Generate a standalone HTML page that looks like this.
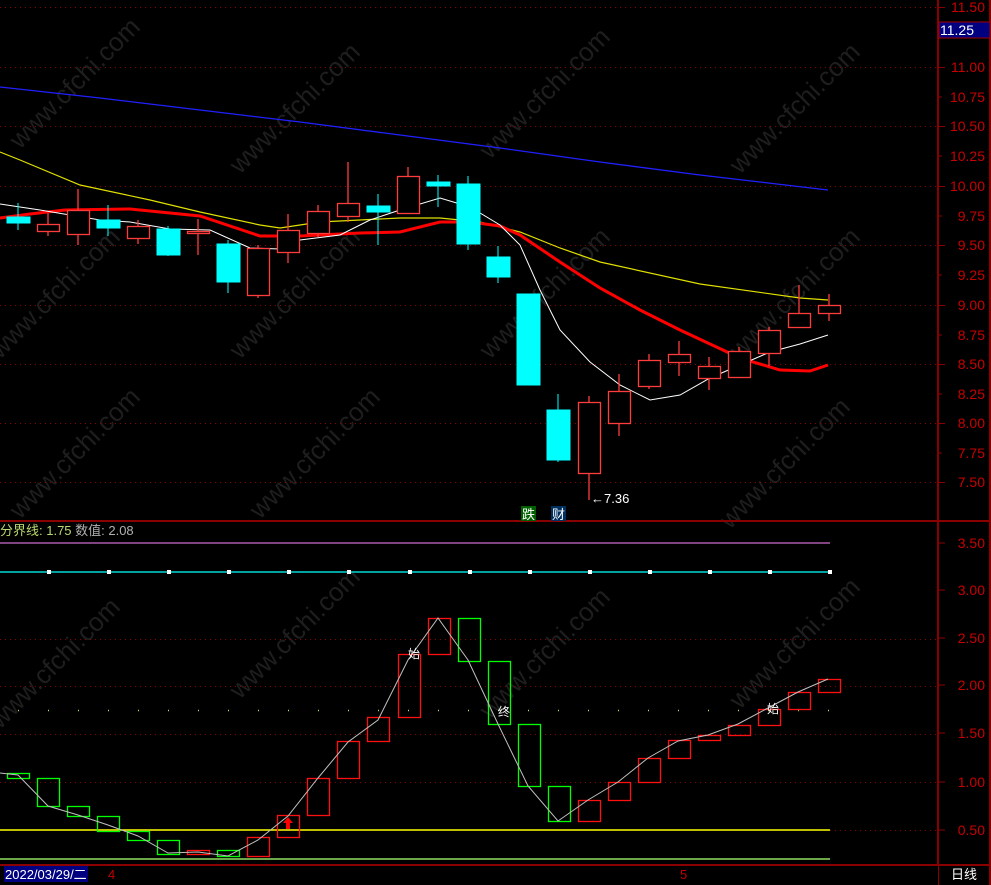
<!DOCTYPE html>
<html><head><meta charset="utf-8"><style>
html,body{margin:0;padding:0;background:#000;}
svg{display:block;font-family:"Liberation Sans","Noto Sans CJK SC",sans-serif;}
</style></head><body>
<svg width="991" height="885" viewBox="0 0 991 885" xmlns="http://www.w3.org/2000/svg">
<rect width="991" height="885" fill="#000"/>
<g fill="#1e1e1e" font-size="26" font-family="Liberation Sans,sans-serif">
<text transform="translate(20,150) rotate(-45)">www.cfchi.com</text>
<text transform="translate(240,175) rotate(-45)">www.cfchi.com</text>
<text transform="translate(490,160) rotate(-45)">www.cfchi.com</text>
<text transform="translate(740,175) rotate(-45)">www.cfchi.com</text>
<text transform="translate(0,360) rotate(-45)">www.cfchi.com</text>
<text transform="translate(240,360) rotate(-45)">www.cfchi.com</text>
<text transform="translate(490,360) rotate(-45)">www.cfchi.com</text>
<text transform="translate(740,360) rotate(-45)">www.cfchi.com</text>
<text transform="translate(20,520) rotate(-45)">www.cfchi.com</text>
<text transform="translate(260,520) rotate(-45)">www.cfchi.com</text>
<text transform="translate(730,530) rotate(-45)">www.cfchi.com</text>
<text transform="translate(0,730) rotate(-45)">www.cfchi.com</text>
<text transform="translate(240,700) rotate(-45)">www.cfchi.com</text>
<text transform="translate(490,720) rotate(-45)">www.cfchi.com</text>
<text transform="translate(740,710) rotate(-45)">www.cfchi.com</text>
</g>
<g stroke="#8a0000" stroke-width="1" stroke-dasharray="1,4">
<line x1="0" y1="7.5" x2="938" y2="7.5"/><line x1="0" y1="67.5" x2="938" y2="67.5"/>
<line x1="0" y1="126.5" x2="938" y2="126.5"/><line x1="0" y1="186.5" x2="938" y2="186.5"/>
<line x1="0" y1="245.5" x2="938" y2="245.5"/><line x1="0" y1="305.5" x2="938" y2="305.5"/>
<line x1="0" y1="364.5" x2="938" y2="364.5"/><line x1="0" y1="423.5" x2="938" y2="423.5"/>
<line x1="0" y1="482.5" x2="938" y2="482.5"/>
<line x1="0" y1="639.5" x2="938" y2="639.5"/><line x1="0" y1="686.5" x2="938" y2="686.5"/>
<line x1="0" y1="734.5" x2="938" y2="734.5"/><line x1="0" y1="782.5" x2="938" y2="782.5"/>
<line x1="830" y1="830.5" x2="938" y2="830.5"/>
</g>
<g stroke="#8a0000" stroke-width="2" fill="none">
<line x1="938" y1="0" x2="938" y2="885"/>
<line x1="0" y1="521" x2="991" y2="521"/>
<line x1="0" y1="865" x2="991" y2="865"/>
<line x1="990" y1="0" x2="990" y2="885"/>
</g>
<g stroke="#8a0000" stroke-width="1">
<line x1="938" y1="7.5" x2="945" y2="7.5"/><line x1="938" y1="67.5" x2="945" y2="67.5"/><line x1="938" y1="97" x2="942" y2="97"/>
<line x1="938" y1="126.5" x2="945" y2="126.5"/><line x1="938" y1="156" x2="942" y2="156"/><line x1="938" y1="186.5" x2="945" y2="186.5"/>
<line x1="938" y1="216" x2="942" y2="216"/><line x1="938" y1="245.5" x2="945" y2="245.5"/><line x1="938" y1="275" x2="942" y2="275"/>
<line x1="938" y1="305.5" x2="945" y2="305.5"/><line x1="938" y1="335" x2="942" y2="335"/><line x1="938" y1="364.5" x2="945" y2="364.5"/>
<line x1="938" y1="394" x2="942" y2="394"/><line x1="938" y1="423.5" x2="945" y2="423.5"/><line x1="938" y1="453" x2="942" y2="453"/>
<line x1="938" y1="482.5" x2="945" y2="482.5"/>
<line x1="938" y1="543" x2="945" y2="543"/><line x1="938" y1="590" x2="945" y2="590"/><line x1="938" y1="638" x2="945" y2="638"/>
<line x1="938" y1="685" x2="945" y2="685"/><line x1="938" y1="733" x2="945" y2="733"/><line x1="938" y1="782" x2="945" y2="782"/>
<line x1="938" y1="830" x2="945" y2="830"/>
<line x1="110" y1="866" x2="110" y2="880"/><line x1="679" y1="866" x2="679" y2="880"/>
</g>
<g fill="#c80000" font-size="14" text-anchor="end">
<text x="985" y="12">11.50</text><text x="985" y="72">11.00</text><text x="985" y="102">10.75</text>
<text x="985" y="131">10.50</text><text x="985" y="161">10.25</text><text x="985" y="191">10.00</text>
<text x="985" y="221">9.75</text><text x="985" y="250">9.50</text><text x="985" y="280">9.25</text>
<text x="985" y="310">9.00</text><text x="985" y="340">8.75</text><text x="985" y="369">8.50</text>
<text x="985" y="399">8.25</text><text x="985" y="428">8.00</text><text x="985" y="458">7.75</text>
<text x="985" y="487">7.50</text>
<text x="985" y="548">3.50</text><text x="985" y="595">3.00</text><text x="985" y="643">2.50</text>
<text x="985" y="690">2.00</text><text x="985" y="738">1.50</text><text x="985" y="787">1.00</text>
<text x="985" y="835">0.50</text>
</g>
<rect x="939" y="22" width="51" height="16" fill="#000080" stroke="#a00000"/>
<text x="940" y="35" fill="#fff" font-size="14">11.25</text>

<polyline fill="none" stroke="#2020ff" stroke-width="1.3" points="0,87 100,98 200,110 300,122 400,135 500,148 600,162 700,175 828,190"/>
<polyline fill="none" stroke="#e0e000" stroke-width="1.2" points="0,152 20,160 80,185 150,200 200,212 260,225 280,228 320,222 400,218 440,218 480,222 520,232 560,248 600,262 700,284 800,298 828,300"/>
<polyline fill="none" stroke="#ff0000" stroke-width="3" points="0,218 30,214 65,210 130,209 200,216 260,236 300,236 360,233 400,232 440,222 470,222 500,226 520,235 560,262 600,288 640,310 680,330 740,358 780,370 810,371 828,365"/>
<polyline fill="none" stroke="#fff" stroke-width="1" points="0,204 40,210 70,215 100,220 130,222 170,229 210,230 250,248 280,249 300,240 340,235 370,220 400,210 440,198 470,207 500,225 520,245 540,290 560,330 590,362 620,385 650,400 680,395 710,378 740,365 770,352 800,344 828,335"/>

<g stroke="#00ffff" fill="#00ffff">
<line x1="18" y1="203" x2="18" y2="230"/><rect x="7" y="217" width="23" height="6"/>
<line x1="108" y1="205" x2="108" y2="236"/><rect x="97" y="220" width="23" height="8"/>
<line x1="168" y1="226" x2="168" y2="256"/><rect x="157" y="229" width="23" height="26"/>
<line x1="228" y1="240" x2="228" y2="293"/><rect x="217" y="244" width="23" height="38"/>
<line x1="378" y1="194" x2="378" y2="245"/><rect x="367" y="206" width="23" height="6"/>
<line x1="438" y1="175" x2="438" y2="207"/><rect x="427" y="182" width="23" height="4"/>
<line x1="468" y1="176" x2="468" y2="250"/><rect x="457" y="184" width="23" height="60"/>
<line x1="498" y1="246" x2="498" y2="283"/><rect x="487" y="257" width="23" height="20"/>
<rect x="517" y="294" width="23" height="91"/>
<line x1="558" y1="394" x2="558" y2="462"/><rect x="547" y="410" width="23" height="50"/>
</g>
<g stroke="#ff3c3c" fill="#000" stroke-width="1.3">
<line x1="48" y1="213" x2="48" y2="236"/><rect x="37.5" y="224.5" width="22" height="7"/>
<line x1="78" y1="189" x2="78" y2="245"/><rect x="67.5" y="210.5" width="22" height="24"/>
<line x1="138" y1="220" x2="138" y2="244"/><rect x="127.5" y="226.5" width="22" height="12"/>
<line x1="198" y1="219" x2="198" y2="255"/><rect x="187.5" y="231.5" width="22" height="2"/>
<line x1="258" y1="245" x2="258" y2="298"/><rect x="247.5" y="248.5" width="22" height="47"/>
<line x1="288" y1="214" x2="288" y2="263"/><rect x="277.5" y="230.5" width="22" height="22"/>
<line x1="318" y1="205" x2="318" y2="237"/><rect x="307.5" y="211.5" width="22" height="22"/>
<line x1="348" y1="162" x2="348" y2="222"/><rect x="337.5" y="203.5" width="22" height="13"/>
<line x1="408" y1="167" x2="408" y2="213"/><rect x="397.5" y="176.5" width="22" height="37"/>
<line x1="589" y1="396" x2="589" y2="500"/><rect x="578.5" y="402.5" width="22" height="71"/>
<line x1="619" y1="374" x2="619" y2="436"/><rect x="608.5" y="391.5" width="22" height="32"/>
<line x1="649" y1="354" x2="649" y2="389"/><rect x="638.5" y="360.5" width="22" height="26"/>
<line x1="679" y1="341" x2="679" y2="376"/><rect x="668.5" y="354.5" width="22" height="8"/>
<line x1="709" y1="357" x2="709" y2="390"/><rect x="698.5" y="366.5" width="22" height="12"/>
<line x1="739" y1="347" x2="739" y2="377"/><rect x="728.5" y="351.5" width="22" height="26"/>
<line x1="769" y1="327" x2="769" y2="366"/><rect x="758.5" y="330.5" width="22" height="23"/>
<line x1="799" y1="285" x2="799" y2="327"/><rect x="788.5" y="313.5" width="22" height="14"/>
<line x1="829" y1="294" x2="829" y2="321"/><rect x="818.5" y="305.5" width="22" height="8"/>
</g>
<text x="591" y="503" fill="#fff" font-size="13">←7.36</text>
<rect x="521" y="506" width="15" height="15" fill="#006000"/><text x="522" y="519" fill="#fff" font-size="13">跌</text>
<rect x="551" y="506" width="15" height="15" fill="#003060"/><text x="552" y="519" fill="#fff" font-size="13">财</text>

<text x="0" y="535" font-size="13" fill="#b8d870">分界线: 1.75 <tspan fill="#b0b0b0">数值: 2.08</tspan></text>
<line x1="0" y1="543" x2="830" y2="543" stroke="#ff88ff" stroke-width="1"/>
<line x1="0" y1="572" x2="831" y2="572" stroke="#00d8d8" stroke-width="1.5"/>
<g fill="#fff">
<rect x="47" y="570" width="4" height="4"/><rect x="107" y="570" width="4" height="4"/><rect x="167" y="570" width="4" height="4"/>
<rect x="227" y="570" width="4" height="4"/><rect x="287" y="570" width="4" height="4"/><rect x="347" y="570" width="4" height="4"/>
<rect x="408" y="570" width="4" height="4"/><rect x="468" y="570" width="4" height="4"/><rect x="528" y="570" width="4" height="4"/>
<rect x="588" y="570" width="4" height="4"/><rect x="648" y="570" width="4" height="4"/><rect x="708" y="570" width="4" height="4"/>
<rect x="768" y="570" width="4" height="4"/><rect x="828" y="570" width="4" height="4"/>
</g>
<line x1="18" y1="710.5" x2="840" y2="710.5" stroke="#a8e060" stroke-width="1.5" stroke-dasharray="1,29"/>
<line x1="0" y1="830" x2="830" y2="830" stroke="#ffff00" stroke-width="1.5"/>
<line x1="0" y1="859" x2="830" y2="859" stroke="#90e060" stroke-width="1.5"/>
<g fill="none" stroke="#00ff00" stroke-width="1.3">
<rect x="7.5" y="773.5" width="22" height="5"/><rect x="37.5" y="778.5" width="22" height="28"/>
<rect x="67.5" y="806.5" width="22" height="10"/><rect x="97.5" y="816.5" width="22" height="15"/>
<rect x="127.5" y="831.5" width="22" height="9"/><rect x="157.5" y="840.5" width="22" height="14"/>
<rect x="217.5" y="850.5" width="22" height="6"/>
<rect x="458.5" y="618.5" width="22" height="43"/><rect x="488.5" y="661.5" width="22" height="63"/>
<rect x="518.5" y="724.5" width="22" height="62"/><rect x="548.5" y="786.5" width="22" height="35"/>
</g>
<g fill="none" stroke="#ff1010" stroke-width="1.3">
<rect x="187.5" y="850.5" width="22" height="4"/><rect x="247.5" y="837.5" width="22" height="19"/>
<rect x="277.5" y="815.5" width="22" height="22"/><rect x="307.5" y="778.5" width="22" height="37"/>
<rect x="337.5" y="741.5" width="22" height="37"/><rect x="367.5" y="717.5" width="22" height="24"/>
<rect x="398.5" y="654.5" width="22" height="63"/><rect x="428.5" y="618.5" width="22" height="36"/>
<rect x="578.5" y="800.5" width="22" height="21"/><rect x="608.5" y="782.5" width="22" height="18"/>
<rect x="638.5" y="758.5" width="22" height="24"/><rect x="668.5" y="740.5" width="22" height="18"/>
<rect x="698.5" y="735.5" width="22" height="5"/><rect x="728.5" y="725.5" width="22" height="10"/>
<rect x="758.5" y="709.5" width="22" height="16"/><rect x="788.5" y="692.5" width="22" height="17"/>
<rect x="818.5" y="679.5" width="22" height="13"/>
</g>
<polyline fill="none" stroke="#c0c0c0" stroke-width="1" points="0,773 18,775 48,806 78,815 108,825 138,836 168,853 198,852 228,856 258,840 288,816 318,778 348,742 378,720 408,660 438,618 468,660 498,724 528,786 558,821 588,800 618,782 648,758 678,741 708,735 738,724 768,708 798,692 828,679"/>
<path d="M288 817 l-5 6 h3 v6 h4 v-6 h3 z" fill="#ff0000"/>
<g font-size="12" fill="#fff">
<text x="408" y="658">始</text><text x="498" y="716">终</text><text x="767" y="713">始</text>
</g>

<rect x="0" y="866" width="938" height="19" fill="#000"/>
<rect x="4" y="866" width="84" height="16" fill="#000080"/>
<text x="5" y="879" fill="#fff" font-size="13">2022/03/29/二</text>
<text x="108" y="879" fill="#c00000" font-size="13">4</text>
<text x="680" y="879" fill="#c00000" font-size="13">5</text>
<text x="951" y="879" fill="#fff" font-size="13">日线</text>
</svg>
</body></html>
